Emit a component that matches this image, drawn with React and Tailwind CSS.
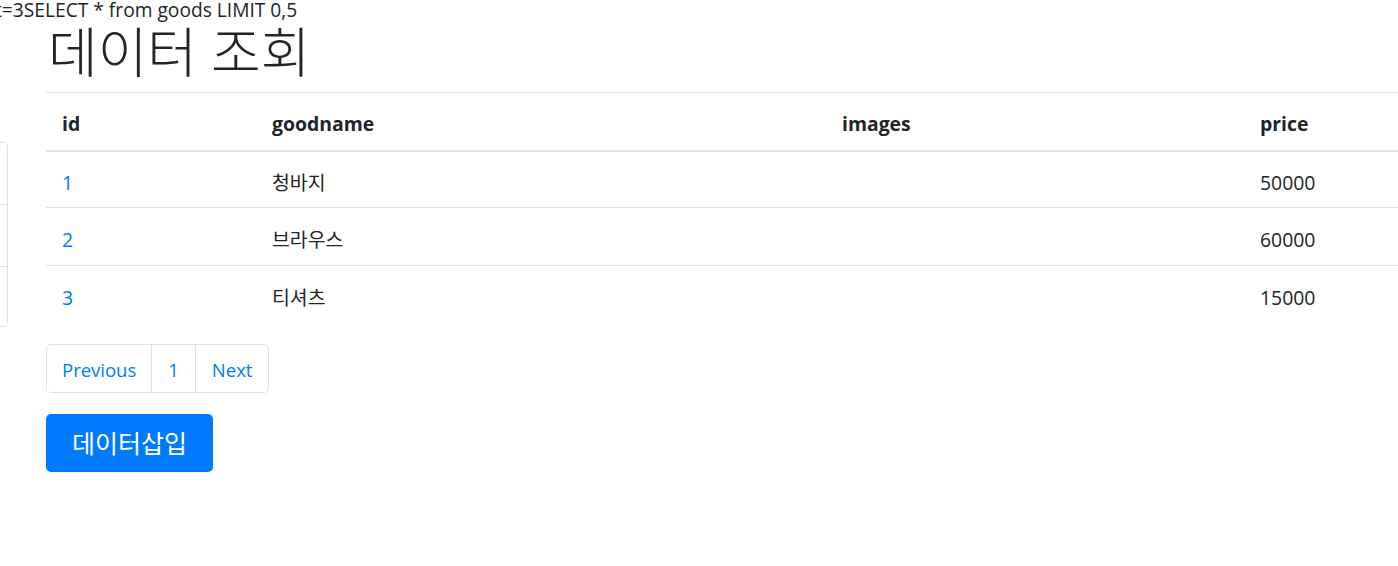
import React from 'react';

const goods = [
  { id: 1, goodname: '청바지', images: '', price: 50000 },
  { id: 2, goodname: '브라우스', images: '', price: 60000 },
  { id: 3, goodname: '티셔츠', images: '', price: 15000 },
];

const font = { fontFamily: '"Open Sans", "Noto Sans CJK KR", sans-serif' };

const App = () => {
  return (
    <div className="w-[1398px] h-[566px] overflow-hidden bg-white text-[#212529]" style={font}>
      {/* query echoed by the server */}
      <p className="whitespace-nowrap text-[19.2px] leading-[20px] -ml-[5px]">t=3SELECT * from goods LIMIT 0,5</p>

      <div className="flex items-start">
        {/* list group, mostly scrolled out of view */}
        <div className="w-[200px] -ml-[192px] mt-[122px] shrink-0 border border-[#dee2e6] rounded-[5px]">
          <div className="h-[61px]"></div>
          <div className="h-[62px] border-t border-[#dee2e6]"></div>
          <div className="h-[60px] border-t border-[#dee2e6]"></div>
        </div>

        <div className="ml-[38px] shrink-0">
          <h1 className="mt-[3px] text-[54px] leading-[58px] font-light whitespace-nowrap pl-[2px]">데이터 조회</h1>

          <table className="mt-[11px] w-[1500px] table-fixed border-collapse text-[19.4px]">
            <colgroup>
              <col className="w-[210px]" />
              <col className="w-[570px]" />
              <col className="w-[418px]" />
              <col className="w-[302px]" />
            </colgroup>
            <thead>
              <tr className="h-[58px] border-t border-b-2 border-[#dee2e6]">
                <th className="text-left font-bold pl-[16px] pt-[5px] align-middle">id</th>
                <th className="text-left font-bold pl-[16px] pt-[5px] align-middle">goodname</th>
                <th className="text-left font-bold pl-[16px] pt-[5px] align-middle">images</th>
                <th className="text-left font-bold pl-[16px] pt-[5px] align-middle">price</th>
              </tr>
            </thead>
            <tbody>
              {goods.map((good, index) => (
                <tr key={good.id} className={index === 0 ? 'h-[57px]' : 'h-[58px] border-t border-[#dee2e6]'}>
                  <td className="pl-[16px] pt-[6px] align-middle">
                    <a href="#" className="text-[#007bff]">{good.id}</a>
                  </td>
                  <td className="pl-[16px] pt-[6px] align-middle">{good.goodname}</td>
                  <td className="pl-[16px] pt-[6px] align-middle">{good.images}</td>
                  <td className="pl-[16px] pt-[6px] align-middle">{good.price}</td>
                </tr>
              ))}
            </tbody>
          </table>

          <div className="mt-[20px] inline-flex border border-[#dee2e6] rounded-[5px] text-[18.5px] leading-[45px] text-[#007bff]">
            <a href="#" className="px-[15px] pt-[2px]">Previous</a>
            <a href="#" className="px-[16px] pt-[2px] border-l border-[#dee2e6]">1</a>
            <a href="#" className="px-[16px] pt-[2px] border-l border-[#dee2e6]">Next</a>
          </div>

          <div className="mt-[21px]">
            <button type="button" className="h-[58px] px-[26px] pt-[3px] bg-[#007bff] text-white text-[25px] rounded-[5px]">
              데이터삽입
            </button>
          </div>
        </div>
      </div>
    </div>
  );
};

export default App;
